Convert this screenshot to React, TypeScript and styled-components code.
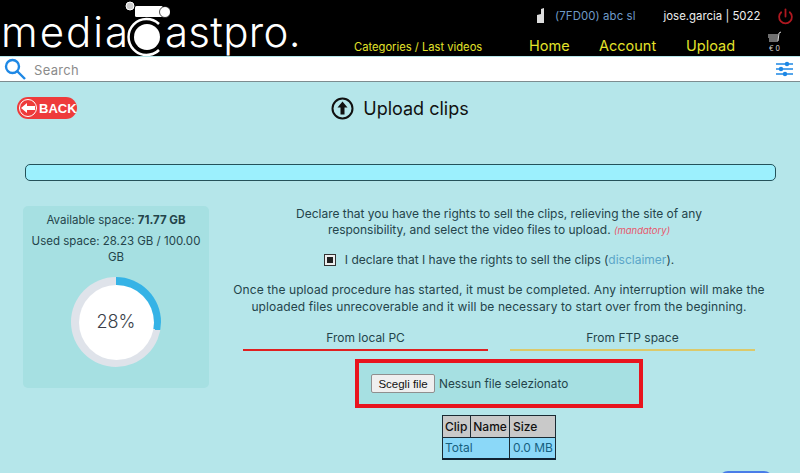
import React from 'react'
import styled, { createGlobalStyle } from 'styled-components'

const Global = createGlobalStyle`
  html, body {
    margin: 0;
    height: 100%;
    overflow: hidden;
    background: #b5e6ea;
  }
  body {
    font-family: Inter, "Noto Sans", sans-serif;
    color: #1d3236;
  }
`

const Header = styled.header`
  height: 56px;
  background: #000;
  display: flex;
  justify-content: space-between;
  overflow: hidden;
`

const Logo = styled.div`
  display: flex;
  align-items: flex-start;
  margin-left: 1px;
  color: #fff;
  font-weight: 300;
  font-size: 42px;
  line-height: 48px;
  height: 56px;
`

const LogoWord = styled.span`
  margin-top: 8px;
  width: ${p => p.$w}px;
  letter-spacing: ${p => p.$spacing}px;
  white-space: nowrap;
`

const LogoMark = styled.svg`
  width: 46px;
  height: 56px;
  margin: 0 -5px 0 -4px;
  flex: none;
`

const HeaderRight = styled.div`
  width: 447px;
  display: flex;
  flex-direction: column;
`

const UserRow = styled.div`
  height: 32px;
  display: flex;
  align-items: center;
  padding-left: 183px;
  font-size: 11.4px;
`

const CompanyName = styled.span`
  color: #6f9ac6;
  margin-left: 9px;
  letter-spacing: 0.1px;
`

const UserName = styled.span`
  color: #eee;
  margin-left: 28px;
`

const Power = styled.svg`
  width: 17px;
  height: 17px;
  margin-left: 17px;
  flex: none;
`

const NavRow = styled.nav`
  display: flex;
  align-items: center;
  height: 24px;
  color: #e3e32a;
`

const Categories = styled.span`
  font-size: 11.2px;
  margin-left: 1px;
  width: 175px;
  white-space: nowrap;
  padding-top: 6px;
`

const NavLink = styled.a`
  font-size: 14.5px;
  width: ${p => p.$w}px;
  white-space: nowrap;
  padding-top: 3px;
`

const Cart = styled.div`
  display: flex;
  flex-direction: column;
  align-items: center;
  color: #ddd;
  font-size: 7px;
  line-height: 7px;
  margin-top: -6px;
  margin-left: -1px;
`

const SearchBar = styled.div`
  height: 24px;
  background: #fff;
  margin-top: 1px;
  border-bottom: 1px solid #7d8c8f;
  display: flex;
  align-items: center;
  padding: 0 7px 0 4px;
`

const SearchText = styled.span`
  flex: 1;
  margin-left: 8px;
  padding-top: 1px;
  color: #8b8b8b;
  font-size: 13px;
  letter-spacing: 0.3px;
`

const TitleRow = styled.div`
  display: grid;
  grid-template-columns: 1fr auto 1fr;
  align-items: center;
  height: 52px;
  padding: 0 17px;
`

const BackButton = styled.button`
  justify-self: start;
  width: 60px;
  height: 22px;
  padding: 0 0 0 1px;
  border: 0;
  border-radius: 11px;
  background: #ee3b3b;
  color: #fff;
  font-family: "Liberation Sans", Arial, sans-serif;
  font-weight: 700;
  font-size: 13px;
  display: flex;
  align-items: center;
  gap: 1px;
`

const Title = styled.h1`
  margin: 0;
  display: flex;
  align-items: center;
  gap: 9px;
  font-size: 18px;
  font-weight: 400;
  color: #111;
`

const ProgressBar = styled.div`
  height: 15px;
  margin: 30px 24px 0 25px;
  background: #9cf0fd;
  border: 1px solid #24525a;
  border-radius: 5px;
`

const Columns = styled.div`
  display: grid;
  grid-template-columns: 186px 548px;
  column-gap: 16px;
  margin: 25px 0 0 23px;
`

const SpaceCard = styled.aside`
  height: 182px;
  background: #a6e0e2;
  border-radius: 5px;
  padding-top: 6px;
  box-sizing: border-box;
  text-align: center;
  font-size: 11.5px;
  line-height: 16px;
  color: #24444a;
`

const SpaceLine = styled.div`
  margin-bottom: 5px;
  white-space: nowrap;
`

const Ring = styled.div`
  width: 90px;
  height: 90px;
  margin: 12px auto 0;
  border-radius: 50%;
  background: conic-gradient(#35b3e6 0 28%, #dfe3ea 0);
  display: flex;
  align-items: center;
  justify-content: center;
`

const RingHole = styled.div`
  width: 75px;
  height: 75px;
  border-radius: 50%;
  background: #fff;
  display: flex;
  align-items: center;
  justify-content: center;
  font-size: 18px;
  font-weight: 300;
  color: #3a3f4a;
`

const Declare = styled.section`
  text-align: center;
  font-size: 12px;
  line-height: 16px;
  color: #24444a;
`

const Para = styled.p`
  margin: 0;
  white-space: nowrap;
  line-height: ${p => p.$leading}px;
  letter-spacing: ${p => p.$spacing}px;
`

const Mandatory = styled.em`
  color: #e8566a;
  font-size: 9.5px;
  letter-spacing: 0;
`

const CheckRow = styled.label`
  display: flex;
  justify-content: center;
  align-items: center;
  gap: 9px;
  margin: 13px 0 13px;
  height: 16px;
`

const CheckBox = styled.span`
  width: 10px;
  height: 10px;
  border: 1.5px solid #333;
  background: #eee;
  display: flex;
  align-items: center;
  justify-content: center;
  &::after {
    content: "";
    width: 6px;
    height: 6px;
    background: #222;
  }
`

const Disclaimer = styled.a`
  color: #5aa5c8;
`

const Tabs = styled.div`
  display: flex;
  justify-content: center;
  gap: 22px;
  margin-top: 16px;
`

const Tab = styled.div`
  width: 245px;
  height: 20px;
  box-sizing: border-box;
  border-bottom: 2px solid ${p => p.$active ? '#e02020' : '#dcc96a'};
  font-size: 12px;
  line-height: 14px;
`

const UploadBox = styled.div`
  width: 288px;
  height: 49px;
  box-sizing: border-box;
  margin: 8px auto 0;
  border: 4px solid #e8141e;
  background: #a6e0e2;
  display: flex;
  align-items: center;
  padding-left: 12px;
  gap: 4px;
  font-size: 11.8px;
  color: #24444a;
`

const FileButton = styled.button`
  width: 64px;
  height: 19px;
  padding: 0;
  background: #efefef;
  border: 1px solid #8f8f8f;
  border-radius: 2px;
  font-family: "Liberation Sans", Arial, sans-serif;
  font-size: 11.5px;
  color: #111;
`

const ClipTable = styled.table`
  margin: 7px auto 0;
  border-collapse: collapse;
  font-size: 12px;
  line-height: 14px;
  border: 1px solid #123;
  border-bottom-width: 2px;
`

const HeadCell = styled.th`
  background: #c9c9c9;
  font-weight: 500;
  color: #111;
  border: 1px solid #1a2a33;
  padding: 3px 2.5px;
  height: 15px;
  text-align: left;
`

const BodyCell = styled.td`
  background: #8bd8f8;
  color: #17607f;
  border: 1px solid #1a2a33;
  padding: 3px 2.5px;
  height: 14px;
  text-align: left;
`

const SubmitRow = styled.div`
  display: flex;
  justify-content: flex-end;
  margin: 11px 27px 0 0;
`

const SubmitButton = styled.div`
  width: 54px;
  height: 20px;
  background: #4a7de8;
  border-radius: 9px;
`

export default function App() {
  return (
    <>
      <Global />
      <Header>
        <Logo>
          <LogoWord $w={127} $spacing={2}>media</LogoWord>
          <LogoMark viewBox="0 0 46 56">
            <circle cx="23" cy="37" r="13" fill="#fff" />
            <path d="M35 50 A18 18 0 1 1 35 24" fill="none" stroke="#fff" strokeWidth="2.5" />
            <circle cx="6" cy="6" r="4" fill="#ccc" stroke="#fff" />
            <rect x="11" y="6" width="28" height="11" rx="1.5" fill="#fff" />
            <circle cx="41" cy="12" r="5.5" fill="#fff" stroke="#000" strokeWidth="0.7" />
          </LogoMark>
          <LogoWord $w={132} $spacing={0.3}>astpro.</LogoWord>
        </Logo>
        <HeaderRight>
          <UserRow>
            <svg width="10" height="16" viewBox="0 0 10 16">
              <path d="M1 15V7l4-1V1l3-1v15z" fill="#ddd" />
            </svg>
            <CompanyName>(7FD00) abc sl</CompanyName>
            <UserName>jose.garcia | 5022</UserName>
            <Power viewBox="0 0 24 24" fill="none" stroke="#b01820" strokeWidth="2.5" strokeLinecap="round">
              <path d="M12 2v10" />
              <path d="M6 6a9 9 0 1 0 12 0" />
            </Power>
          </UserRow>
          <NavRow>
            <Categories>Categories / Last videos</Categories>
            <NavLink $w={70}>Home</NavLink>
            <NavLink $w={87}>Account</NavLink>
            <NavLink $w={82}>Upload</NavLink>
            <Cart>
              <svg width="15" height="14" viewBox="0 0 15 14" fill="none" stroke="#ddd">
                <path d="M14 1l-2 1-1 8H2" />
                <path d="M1 4h10M1 6h10M2 8h9" />
              </svg>
              <span>€ 0</span>
            </Cart>
          </NavRow>
        </HeaderRight>
      </Header>

      <SearchBar>
        <svg width="22" height="22" viewBox="0 0 22 22" fill="none" stroke="#1e88e5" strokeWidth="2.4">
          <circle cx="8.5" cy="8.5" r="6.5" />
          <path d="M13.5 13.5L21 21" />
        </svg>
        <SearchText>Search</SearchText>
        <svg width="17" height="16" viewBox="0 0 17 16" stroke="#1e88e5" strokeWidth="1.6" fill="#1e88e5">
          <path d="M0 3h17M0 8h17M0 13h17" />
          <circle cx="11" cy="3" r="1.4" />
          <circle cx="5" cy="8" r="1.4" />
          <circle cx="9" cy="13" r="1.4" />
        </svg>
      </SearchBar>

      <main>
        <TitleRow>
          <BackButton>
            <svg width="20" height="20" viewBox="0 0 20 20">
              <circle cx="10" cy="10" r="8.5" fill="none" stroke="#fff" />
              <path d="M3 10l6-5v3h8v4H9v3z" fill="#fff" />
            </svg>
            BACK
          </BackButton>
          <Title>
            <svg width="23" height="23" viewBox="0 0 23 23">
              <circle cx="11.5" cy="11.5" r="10" fill="none" stroke="#111" strokeWidth="2" />
              <path d="M11.5 4.5l5 6h-3v7h-4v-7h-3z" fill="#111" />
            </svg>
            Upload clips
          </Title>
          <span />
        </TitleRow>

        <ProgressBar />

        <Columns>
          <SpaceCard>
            <SpaceLine>Available space: <b>71.77 GB</b></SpaceLine>
            <SpaceLine>Used space: 28.23 GB / 100.00<br />GB</SpaceLine>
            <Ring>
              <RingHole>28%</RingHole>
            </Ring>
          </SpaceCard>

          <Declare>
            <Para $leading={16} $spacing={-0.01}>
              Declare that you have the rights to sell the clips, relieving the site of any<br />
              responsibility, and select the video files to upload. <Mandatory>(mandatory)</Mandatory>
            </Para>
            <CheckRow>
              <CheckBox />
              <span>I declare that I have the rights to sell the clips (<Disclaimer>disclaimer</Disclaimer>).</span>
            </CheckRow>
            <Para $leading={17} $spacing={0.09}>
              Once the upload procedure has started, it must be completed. Any interruption will make the<br />
              uploaded files unrecoverable and it will be necessary to start over from the beginning.
            </Para>
            <Tabs>
              <Tab $active>From local PC</Tab>
              <Tab>From FTP space</Tab>
            </Tabs>
            <UploadBox>
              <FileButton>Scegli file</FileButton>
              <span>Nessun file selezionato</span>
            </UploadBox>
            <ClipTable>
              <thead>
                <tr>
                  <HeadCell>Clip</HeadCell>
                  <HeadCell>Name</HeadCell>
                  <HeadCell>Size</HeadCell>
                </tr>
              </thead>
              <tbody>
                <tr>
                  <BodyCell colSpan={2}>Total</BodyCell>
                  <BodyCell>0.0 MB</BodyCell>
                </tr>
              </tbody>
            </ClipTable>
          </Declare>
        </Columns>
        <SubmitRow>
          <SubmitButton />
        </SubmitRow>
      </main>
    </>
  )
}
